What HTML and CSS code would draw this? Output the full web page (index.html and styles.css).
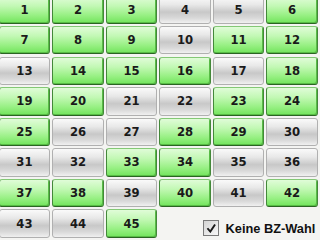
FILE: index.html
```html
<!DOCTYPE html>
<html>
<head>
<meta charset="utf-8">
<link rel="stylesheet" href="styles.css">
</head>
<body>
<div class="grid">
  <div class="btn on">1</div><div class="btn on">2</div><div class="btn on">3</div><div class="btn">4</div><div class="btn">5</div><div class="btn on">6</div>
  <div class="btn on">7</div><div class="btn on">8</div><div class="btn on">9</div><div class="btn">10</div><div class="btn on">11</div><div class="btn on">12</div>
  <div class="btn">13</div><div class="btn on">14</div><div class="btn on">15</div><div class="btn on">16</div><div class="btn">17</div><div class="btn on">18</div>
  <div class="btn on">19</div><div class="btn on">20</div><div class="btn">21</div><div class="btn">22</div><div class="btn on">23</div><div class="btn on">24</div>
  <div class="btn on">25</div><div class="btn">26</div><div class="btn">27</div><div class="btn on">28</div><div class="btn on">29</div><div class="btn">30</div>
  <div class="btn">31</div><div class="btn">32</div><div class="btn on">33</div><div class="btn on">34</div><div class="btn">35</div><div class="btn">36</div>
  <div class="btn on">37</div><div class="btn on">38</div><div class="btn">39</div><div class="btn on">40</div><div class="btn">41</div><div class="btn on">42</div>
  <div class="btn">43</div><div class="btn">44</div><div class="btn on">45</div>
  <label class="check">
    <span class="box"><svg viewBox="0 0 11 11"><path d="M1.5 5.5 L4.5 9 L9.5 1.5" fill="none" stroke="#1a1a1a" stroke-width="2"/></svg></span>
    <span class="label">Keine BZ-Wahl</span>
  </label>
</div>
</body>
</html>
```
FILE: styles.css
```css
html, body {
  margin: 0;
  padding: 0;
  background: #f4f4f2;
  overflow: hidden;
  height: 100%;
}
.grid {
  display: grid;
  grid-template-columns: repeat(6, 1fr);
  grid-template-rows: repeat(8, 1fr);
  column-gap: 0.727vw;
  row-gap: 0.939vh;
  width: 99.64vw;
  height: 100.94vh;
  margin: -1.878vh 0 0 -0.364vw;
}
.btn {
  box-sizing: border-box;
  display: flex;
  align-items: center;
  justify-content: center;
  border-radius: 3px;
  font-family: "DejaVu Sans", sans-serif;
  font-weight: bold;
  font-size: 3.64vw;
  color: #1a1a1a;
  border: 1px solid #b0b0b0;
  background: linear-gradient(to bottom, #fafafa 0%, #e8e8e8 30%, #c8c8c8 58%, #d8d8d8 80%, #f0f0f0 100%);
}
.btn.on {
  border: 1px solid #44883a;
  border-top-color: #84c876;
  border-bottom-color: #2a6422;
  background: linear-gradient(to bottom, #e0fcd8 0%, #c2f8b4 35%, #98f084 70%, #72e45c 100%);
  box-shadow: inset -1px -1px 0 #58bc46;
}
.check {
  grid-column: 4 / 7;
  display: flex;
  align-items: flex-end;
  justify-content: flex-end;
  padding: 0 0.727vw 0.47vh 0;
  font-family: "Liberation Sans", Arial, sans-serif;
  font-weight: bold;
  font-size: 4vw;
  color: #111;
}
.box {
  box-sizing: border-box;
  width: 4.73vw;
  height: 4.73vw;
  border: 1px solid #7a7a7a;
  background: linear-gradient(to bottom right, #d4d4d4, #f8f8f8);
  display: flex;
  align-items: center;
  justify-content: center;
  margin-right: 2.18vw;
  margin-bottom: 0.47vh;
}
.box svg {
  width: 80%;
  height: 80%;
}
.label {
  line-height: 4.73vw;
}
```
